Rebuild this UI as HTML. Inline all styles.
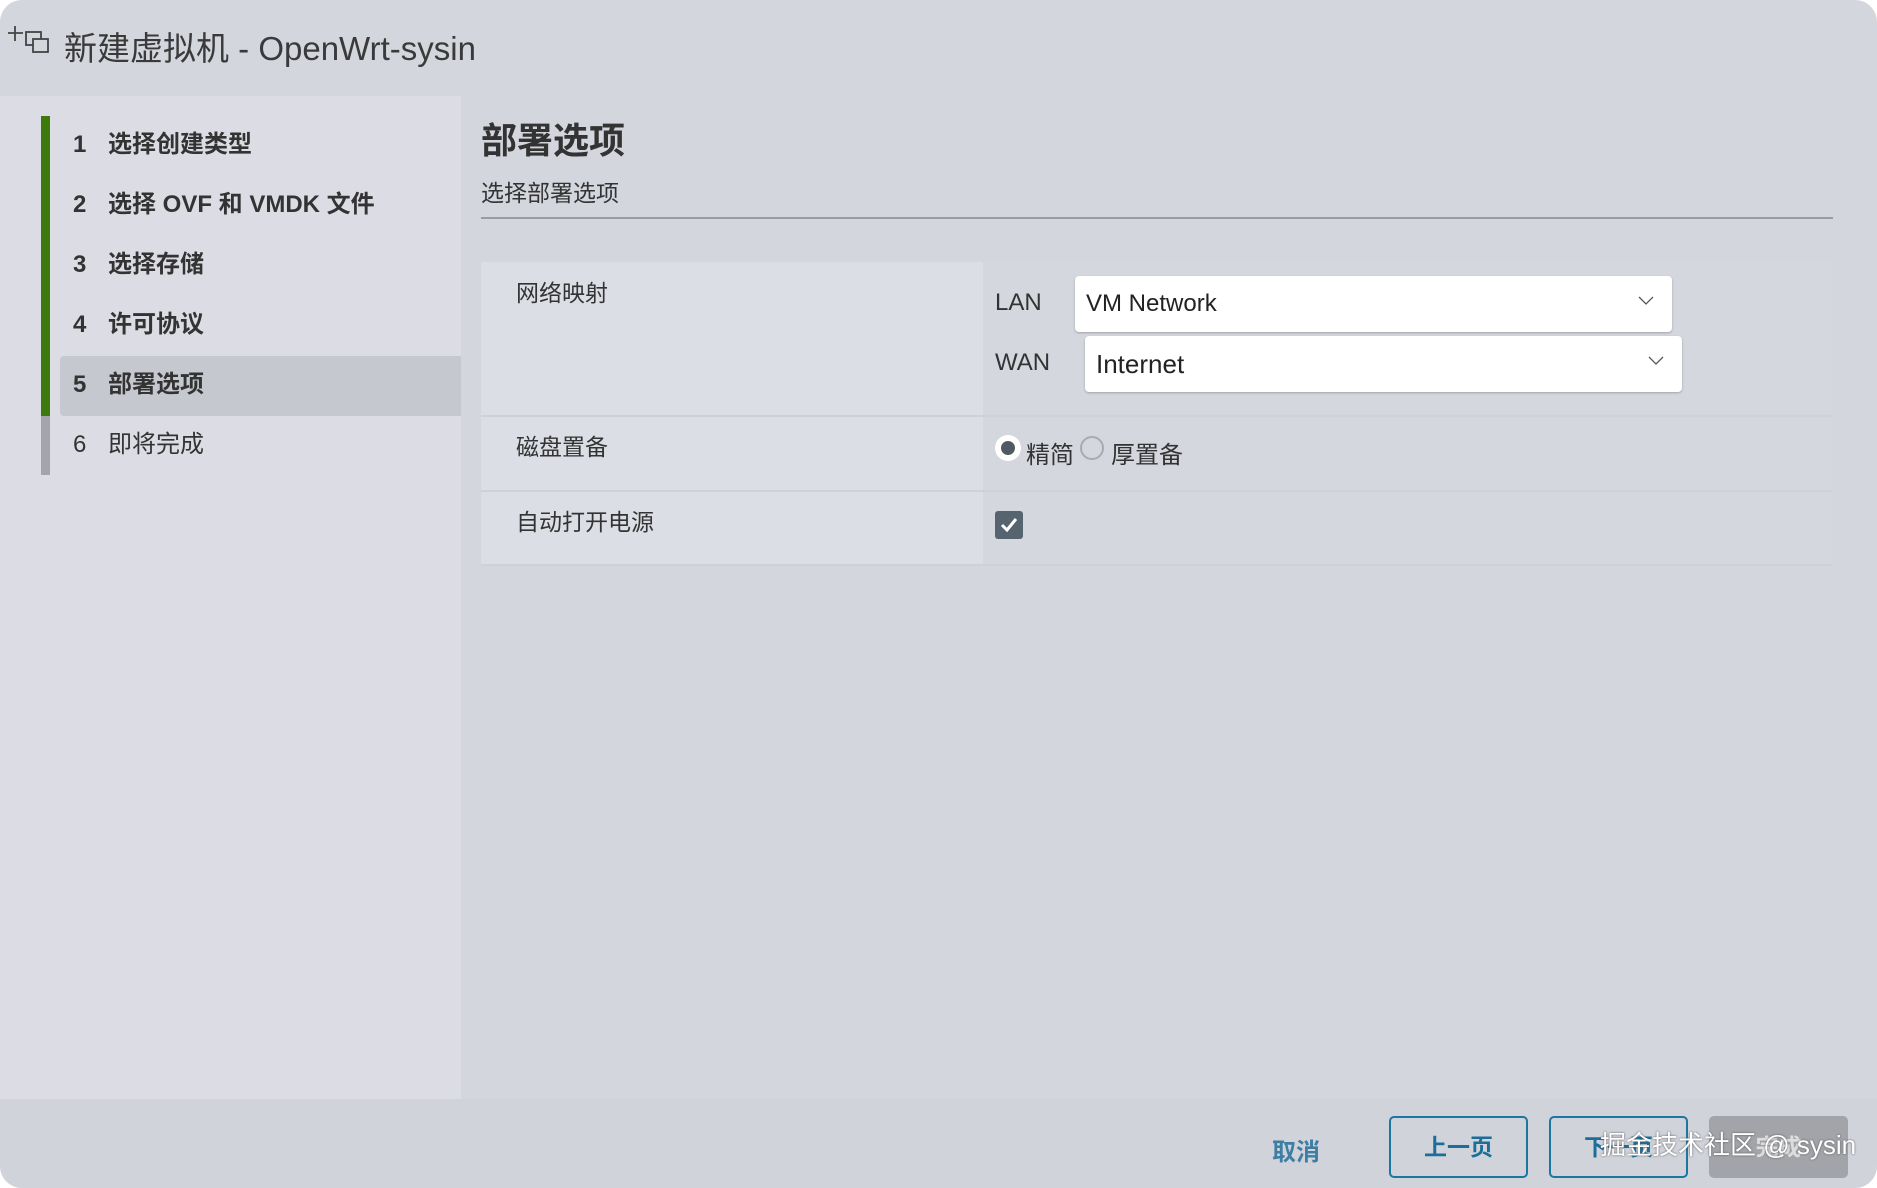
<!DOCTYPE html>
<html><head><meta charset="utf-8"><style>
*{margin:0;padding:0;box-sizing:border-box}
body{width:1877px;height:1188px;background:#fff;font-family:"Liberation Sans","Noto Sans CJK SC",sans-serif;color:#333;position:relative;overflow:hidden}
.win{position:absolute;left:0;top:0;width:1877px;height:1188px;background:#d4d6de;border-radius:22px;overflow:hidden}
.abs{position:absolute}
.title{left:64px;top:22px;font-size:33px;color:#3a3a3a;white-space:nowrap}
.left{left:0;top:96px;width:461px;height:1003px;background:#dcdde4}
.step{position:absolute;left:60px;width:401px;height:60px;line-height:60px;font-size:24px;font-weight:bold;color:#333}
.step .n{position:absolute;left:13px}
.step .t{position:absolute;left:48px}
.main{left:461px;top:96px;width:1416px;height:1003px;background:#d4d6de}
.footer{left:0;top:1099px;width:1877px;height:89px;background:#d1d3db}
.lbl{position:absolute;left:516px;font-size:23px;color:#333}
.sel{position:absolute;background:#fff;border-radius:4px;box-shadow:0 1px 2px rgba(0,0,0,.25);font-size:24px;color:#222;padding-left:11px;line-height:56px}
.btn{position:absolute;top:1116px;height:62px;border:2px solid #1a77a3;border-radius:5px;text-align:center;line-height:58px;font-size:23px;font-weight:bold;color:#1a6f9a}
</style></head><body>
<div class="win">
<svg class="abs" style="left:7px;top:24px" width="46" height="38" viewBox="0 0 46 38"><path d="M8 2v15M1 9h15" stroke="#444" stroke-width="1.8"/><rect x="19" y="8" width="15" height="13" fill="none" stroke="#444" stroke-width="1.8"/><rect x="26" y="15" width="15" height="13" fill="#d4d6de" stroke="#444" stroke-width="1.8"/></svg>
<div class="abs title">新建虚拟机 - OpenWrt-sysin</div>
<div class="abs left">
<div class="abs" style="left:41px;top:20px;width:9px;height:300px;background:#3e7a0b"></div>
<div class="abs" style="left:41px;top:320px;width:9px;height:59px;background:#a3a5ab"></div>
<div class="abs" style="left:60px;top:260px;width:401px;height:60px;background:#c6c8cf;border-radius:4px 0 0 4px"></div>
<div class="step" style="top:19px"><span class="n">1</span><span class="t">选择创建类型</span></div>
<div class="step" style="top:79px"><span class="n">2</span><span class="t">选择 OVF 和 VMDK 文件</span></div>
<div class="step" style="top:139px"><span class="n">3</span><span class="t">选择存储</span></div>
<div class="step" style="top:199px"><span class="n">4</span><span class="t">许可协议</span></div>
<div class="step" style="top:259px"><span class="n">5</span><span class="t">部署选项</span></div>
<div class="step" style="top:319px;font-weight:normal"><span class="n">6</span><span class="t">即将完成</span></div>
</div>
<div class="abs main"></div>
<div class="abs" style="left:481px;top:112px;font-size:36px;font-weight:bold;color:#333">部署选项</div>
<div class="abs" style="left:481px;top:174px;font-size:23px;color:#333">选择部署选项</div>
<div class="abs" style="left:481px;top:217px;width:1352px;height:2px;background:#9a9ca3"></div>
<div class="abs" style="left:481px;top:262px;width:502px;height:303px;background:#dcdee6"></div>
<div class="abs" style="left:983px;top:262px;width:850px;height:303px;background:#d5d7df"></div>
<div class="abs" style="left:481px;top:415px;width:1352px;height:2px;background:#cfd1d9"></div>
<div class="abs" style="left:481px;top:490px;width:1352px;height:2px;background:#cfd1d9"></div>
<div class="abs" style="left:481px;top:564px;width:1352px;height:2px;background:#cfd1d9"></div>
<div class="lbl" style="top:274px">网络映射</div>
<div class="lbl" style="top:428px">磁盘置备</div>
<div class="lbl" style="top:503px">自动打开电源</div>
<div class="abs" style="left:995px;top:289px;font-size:24px;color:#333">LAN</div>
<div class="abs" style="left:995px;top:349px;font-size:24px;color:#333">WAN</div>
<div class="sel" style="left:1075px;top:276px;width:597px;height:56px">VM Network<svg class="abs" style="right:18px;top:20px" width="16" height="10"><path d="M1 1l7 7 7-7" fill="none" stroke="#555" stroke-width="1.3"/></svg></div>
<div class="sel" style="left:1085px;top:336px;width:597px;height:56px;font-size:26px">Internet<svg class="abs" style="right:18px;top:20px" width="16" height="10"><path d="M1 1l7 7 7-7" fill="none" stroke="#555" stroke-width="1.3"/></svg></div>
<div class="abs" style="left:995px;top:435px;width:26px;height:26px;border-radius:50%;background:#fff"><div class="abs" style="left:6px;top:6px;width:14px;height:14px;border-radius:50%;background:#505a63"></div></div>
<div class="abs" style="left:1026px;top:435px;font-size:24px;color:#333">精简</div>
<div class="abs" style="left:1080px;top:436px;width:24px;height:24px;border-radius:50%;border:2px solid #a8aab0"></div>
<div class="abs" style="left:1111px;top:435px;font-size:24px;color:#333">厚置备</div>
<div class="abs" style="left:995px;top:511px;width:28px;height:28px;border-radius:3px;background:#566470"><svg width="28" height="28"><path d="M7 14l5 5 9-11" fill="none" stroke="#fff" stroke-width="3"/></svg></div>
<div class="abs footer"></div>
<div class="abs" style="left:1272px;top:1132px;font-size:24px;font-weight:bold;color:#3d7ea3">取消</div>
<div class="btn" style="left:1389px;width:139px">上一页</div>
<div class="btn" style="left:1549px;width:139px">下一页</div>
<div class="abs" style="left:1709px;top:1116px;width:139px;height:62px;border-radius:5px;background:#a2a4a9;color:#ddd;font-size:23px;font-weight:bold;text-align:center;line-height:62px">完成</div>
<div class="abs" style="left:1600px;top:1125px;font-size:26px;color:#fff;text-shadow:0 0 2px #555">掘金技术社区 @ sysin</div>
</div>
</body></html>
